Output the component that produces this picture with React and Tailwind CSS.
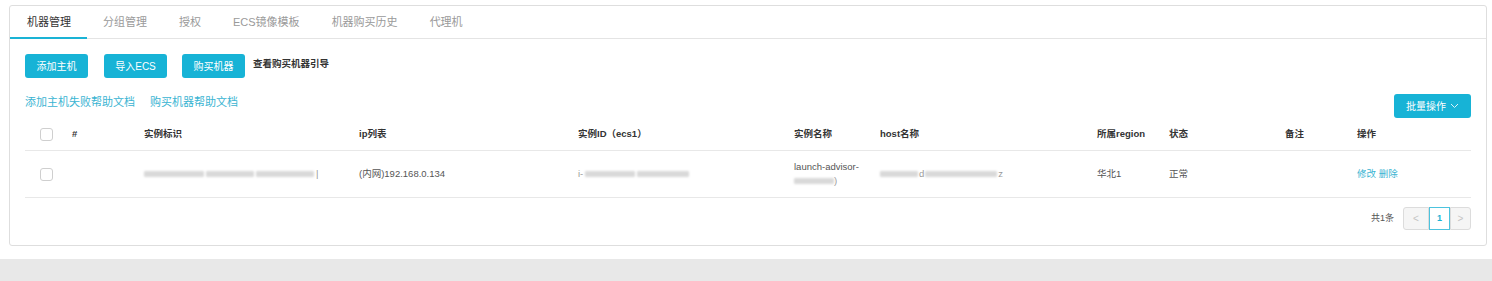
const tabs = ["机器管理", "分组管理", "授权", "ECS镜像模板", "机器购买历史", "代理机"];

const columns = [
  "",
  "#",
  "实例标识",
  "ip列表",
  "实例ID（ecs1）",
  "实例名称",
  "host名称",
  "所属region",
  "状态",
  "备注",
  "操作",
];

const gridCols =
  "grid grid-cols-[47px_72px_215px_219px_216px_86px_217px_72px_116px_72px_1fr]";

// redacted text in the screenshot, drawn as soft grey blocks
function Blur({ w, className = "" }) {
  return (
    <span
      className={`inline-block h-[6px] rounded-[1px] bg-[#d9d9d9] blur-[0.8px] align-middle ${className}`}
      style={{ width: w }}
    />
  );
}

function Checkbox() {
  return (
    <span className="ml-[15px] block h-[13px] w-[13px] rounded-[3px] border border-[#cfcfcf] bg-white" />
  );
}

export default function App() {
  return (
    <div className="bg-white font-[Liberation_Sans,Noto_Sans_CJK_SC,sans-serif]">
      <div className="pt-[5px] pl-[9px] pr-[5px]">
        <div className="rounded-[3px] border border-[#dedede] bg-white">
          {/* tabs */}
          <div className="flex h-[33px] border-b border-[#e4e4e4]">
            {tabs.map((t, i) => (
              <div
                key={t}
                className={`relative flex items-center px-4 pt-[1px] text-[11px] ${
                  i === 0 ? "pl-[17px] text-[#333]" : "text-[#9a9a9a]"
                }`}
              >
                {t}
                {i === 0 && (
                  <span className="absolute left-0 right-0 -bottom-px h-[2px] bg-[#1ab3d5]" />
                )}
              </div>
            ))}
          </div>

          <div className="px-[15px] pb-[15px]">
            {/* toolbar */}
            <div className="mt-[15px] flex items-center">
              <button className="h-6 w-[63px] rounded-[3px] bg-[#17b3d6] text-[10px] text-white">
                添加主机
              </button>
              <button className="ml-[16px] h-6 w-[63px] rounded-[3px] bg-[#17b3d6] text-[10px] text-white">
                导入ECS
              </button>
              <button className="ml-[15px] h-6 w-[63px] rounded-[3px] bg-[#17b3d6] text-[10px] text-white">
                购买机器
              </button>
              <span className="ml-2 -mt-[4px] text-[9.5px] font-semibold text-[#333]">
                查看购买机器引导
              </span>
            </div>

            <div className="mt-4 flex items-start justify-between">
              <div className="flex gap-[15px] text-[11px] text-[#3ab4d2]">
                <span>添加主机失败帮助文档</span>
                <span>购买机器帮助文档</span>
              </div>
              <button className="flex h-6 w-[77px] items-center justify-center gap-1 rounded-[3px] bg-[#17b3d6] text-[10px] text-white">
                批量操作
                <svg width="9" height="6" viewBox="0 0 9 6" fill="none">
                  <path d="M1 1l3.5 3.5L8 1" stroke="#d9f3f9" strokeWidth="1" />
                </svg>
              </button>
            </div>

            {/* table */}
            <div className="text-[9.5px]">
              <div className={`${gridCols} h-[33px] items-center border-b border-[#e8e8e8] font-semibold text-[#333]`}>
                {columns.map((c, i) => (
                  <div key={i}>{i === 0 ? <Checkbox /> : c}</div>
                ))}
              </div>
              <div className={`${gridCols} h-[47px] items-center border-b border-[#e8e8e8] text-[#555]`}>
                <div>
                  <Checkbox />
                </div>
                <div />
                <div className="flex items-center gap-[2px]">
                  <Blur w={60} />
                  <Blur w={48} />
                  <Blur w={58} />
                  <span className="text-[#999]">|</span>
                </div>
                <div>(内网)192.168.0.134</div>
                <div className="flex items-center gap-[2px]">
                  <span className="text-[#999]">i-</span>
                  <Blur w={50} />
                  <Blur w={52} />
                </div>
                <div className="leading-[14px]">
                  <div>launch-advisor-</div>
                  <div className="flex items-center">
                    <Blur w={40} />
                    <span className="text-[#999]">)</span>
                  </div>
                </div>
                <div className="flex items-center gap-[1px]">
                  <Blur w={38} />
                  <span className="text-[#999]">d</span>
                  <Blur w={72} />
                  <span className="text-[#999]">z</span>
                </div>
                <div>华北1</div>
                <div>正常</div>
                <div />
                <div className="text-[#3ab4d2]">修改 删除</div>
              </div>
            </div>

            {/* pagination */}
            <div className="mt-[9px] flex items-center justify-end">
              <span className="mr-[9px] text-[9px] text-[#555]">共1条</span>
              <div className="flex h-[23px]">
                <span className="flex w-[26px] items-center justify-center rounded-l-[3px] border border-[#dcdcdc] bg-[#f5f5f5] text-[10px] text-[#c4c4c4]">
                  &lt;
                </span>
                <span className="flex w-[21px] items-center justify-center border border-[#4cc3de] bg-white text-[9px] font-semibold text-[#1ab3d5]">
                  1
                </span>
                <span className="flex w-[21px] items-center justify-center rounded-r-[3px] border border-[#dcdcdc] bg-[#f5f5f5] text-[10px] text-[#c4c4c4]">
                  &gt;
                </span>
              </div>
            </div>
          </div>
        </div>
      </div>
      <div className="mt-[13px] h-[23px] bg-[#e8e8e8]" />
    </div>
  );
}
